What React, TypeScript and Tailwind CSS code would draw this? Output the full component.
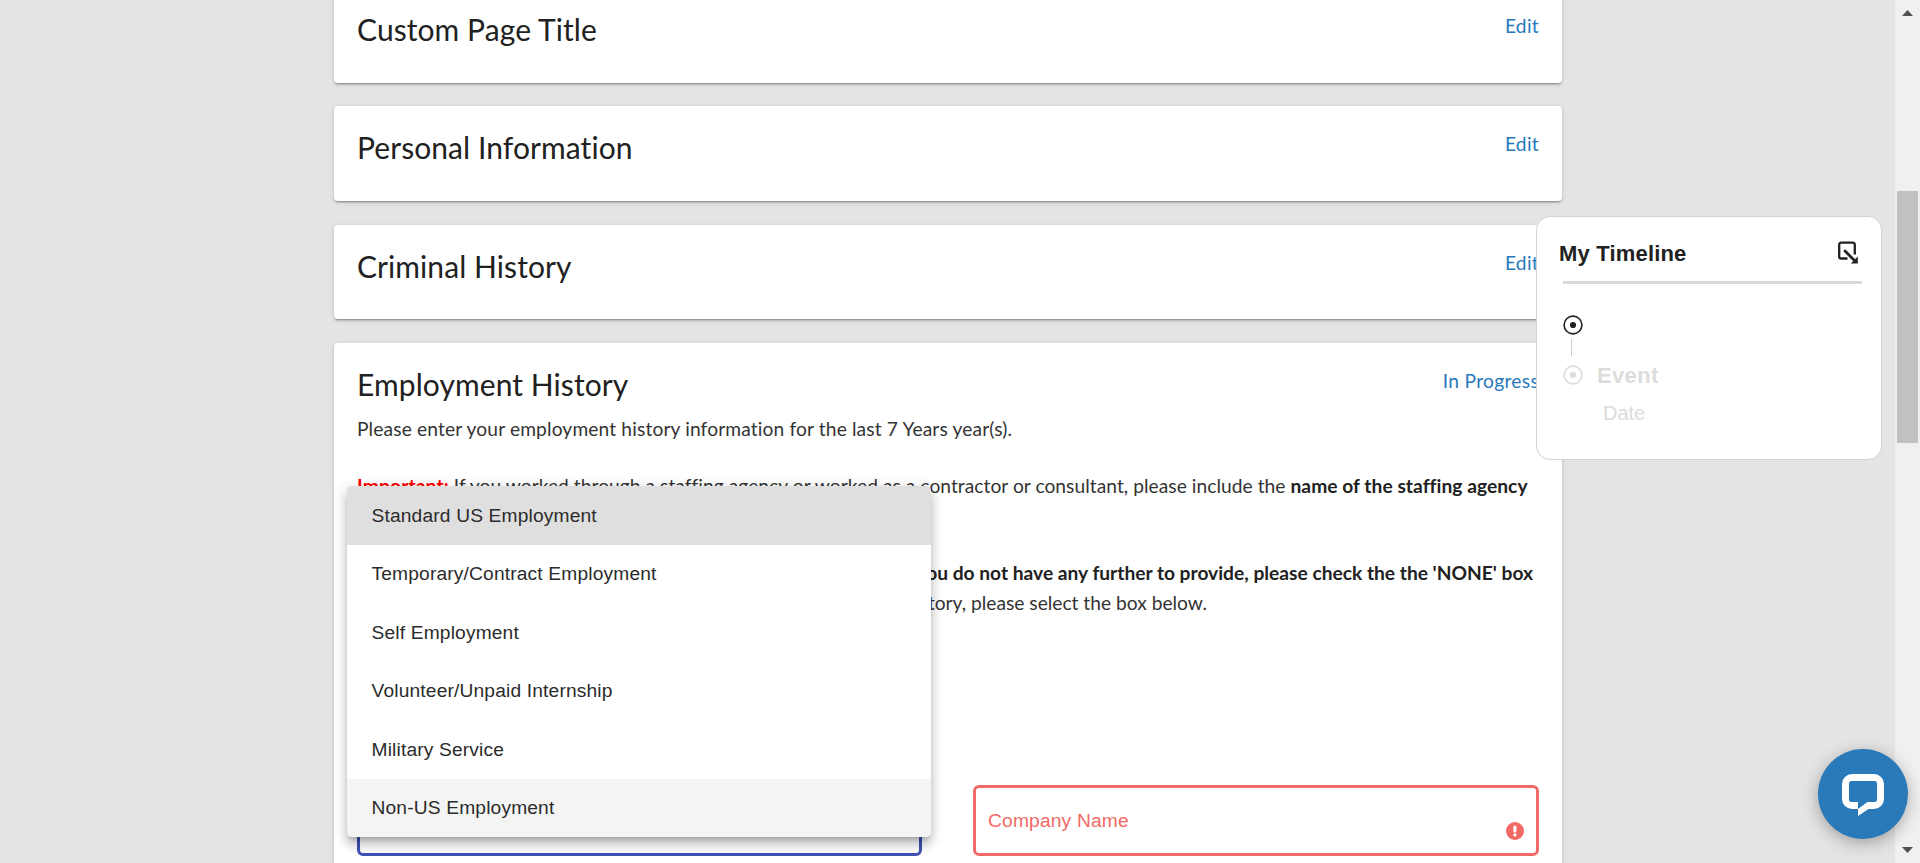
import React from "react";

const cardClass =
  "bg-white rounded-[4px] px-[23px] shadow-[0_3px_1px_-2px_rgba(0,0,0,0.2),0_2px_2px_0_rgba(0,0,0,0.14),0_1px_5px_0_rgba(0,0,0,0.12)]";

function SectionHeader({ title, action }: { title: string; action: string }) {
  return (
    <div className="flex items-start justify-between">
      <h2 className="-mt-[2px] text-[30px] leading-[38px] tracking-[0.08px] whitespace-nowrap">{title}</h2>
      <a className="-mt-px text-[19.2px] leading-[29px] tracking-[0.3px] whitespace-nowrap text-[#2779bd]">
        {action}
      </a>
    </div>
  );
}

function Target({ className }: { className: string }) {
  return (
    <svg className={className} width="20" height="20" viewBox="0 0 20 20" fill="none">
      <circle cx="10" cy="10" r="8.9" stroke="currentColor" strokeWidth="1.6" />
      <circle cx="10" cy="10" r="3.1" fill="currentColor" />
    </svg>
  );
}

const sections = ["Custom Page Title", "Personal Information", "Criminal History"];

const options = [
  { label: "Standard US Employment", row: "bg-[#dfdfdf]" },
  { label: "Temporary/Contract Employment", row: "bg-white" },
  { label: "Self Employment", row: "bg-white" },
  { label: "Volunteer/Unpaid Internship", row: "bg-white" },
  { label: "Military Service", row: "bg-white" },
  { label: "Non-US Employment", row: "bg-[#f4f4f4]" },
];

export default function App() {
  return (
    <div className="relative flex h-[863px] w-full overflow-hidden bg-[#e4e4e4] font-['Lato',sans-serif] text-[#212121] [font-variant-ligatures:none]">
      <main className="-mt-[12px] ml-[334px] flex h-[1000px] w-[1228px] shrink-0 flex-col gap-[23.8px]">
        {sections.map((title) => (
          <section key={title} className={`${cardClass} h-[94.5px] shrink-0 pt-[24px]`}>
            <SectionHeader title={title} action="Edit" />
          </section>
        ))}

        <section className={`${cardClass} flex-1 pt-[24px]`}>
          <SectionHeader title="Employment History" action="In Progress" />
          <div className="text-[19.2px] leading-[28.8px] whitespace-nowrap text-[#333333]">
            <p className="mt-[12px] tracking-[0.14px]">
              Please enter your employment history information for the last 7 Years year(s).
            </p>
            <p className="mt-[28.8px] tracking-[0.045px]">
              <strong className="tracking-[0.15px] text-[#ff0000]">Important:</strong> If you worked
              through a staffing agency or worked as a contractor or consultant, please include the{" "}
              <strong className="text-[#212121]">name of the staffing agency</strong>
            </p>
            <p className="mt-[57.6px] pr-[6px] text-right text-[#212121]">
              <strong>you do not have any further to provide, please check the the 'NONE' box</strong>
            </p>
            <p className="mt-px pr-[332px] text-right">history, please select the box below.</p>
          </div>
          <div className="mt-[168px] flex justify-between font-['Liberation_Sans',Arial,sans-serif]">
            <div className="h-[71px] w-[565px] rounded-[6px] border-[3px] border-[#3f51b5]" />
            <div className="flex h-[71px] w-[566px] justify-between rounded-[6px] border-[3px] border-[#f26a65] px-[12px] text-[#f26a65]">
              <span className="mt-[18px] text-[19.2px] leading-[29px] tracking-[0.18px]">
                Company Name
              </span>
              <svg className="mt-[34px]" width="18" height="18" viewBox="0 0 18 18">
                <circle cx="9" cy="9" r="9" fill="#f26a65" />
                <rect x="7.4" y="3.8" width="3" height="6.6" rx="0.8" fill="#fff" />
                <circle cx="8.9" cy="12.9" r="1.6" fill="#fff" />
              </svg>
            </div>
          </div>
        </section>
      </main>

      <ul className="absolute top-[486px] left-[347px] w-[584px] overflow-hidden rounded-[5px] font-['Liberation_Sans',Arial,sans-serif] shadow-[0_5px_5px_-3px_rgba(0,0,0,0.2),0_8px_10px_1px_rgba(0,0,0,0.14),0_3px_14px_2px_rgba(0,0,0,0.12)]">
        {options.map((o) => (
          <li
            key={o.label}
            className={`flex h-[58.5px] items-center pt-[2px] pl-[24.5px] text-[19.2px] tracking-[0.16px] text-[#2b2b2b] ${o.row}`}
          >
            {o.label}
          </li>
        ))}
      </ul>

      <aside className="absolute top-[216px] left-[1536px] h-[244px] w-[346px] rounded-[14px] border border-[#d3d3d3] bg-white font-['Liberation_Sans',Arial,sans-serif]">
        <div className="flex items-start justify-between px-[22px] pt-[23px]">
          <h3 className="text-[22px] leading-[28px] font-bold tracking-[0.18px]">My Timeline</h3>
          <svg className="mt-px" width="22" height="24" viewBox="0 0 22 24" fill="none" stroke="currentColor">
            <path
              d="M10.500 17.500H4A1.800 1.800 0 0 1 2.200 15.700V3.500A1.800 1.800 0 0 1 4 1.700H16A1.800 1.800 0 0 1 17.800 3.500V13.500"
              strokeWidth="2.300"
            />
            <path d="M8 10L18 20" strokeWidth="2.800" strokeLinecap="round" />
            <path d="M20.800 15.500V22.500H13.800Z" fill="currentColor" stroke="none" />
          </svg>
        </div>
        <div className="mt-[13px] ml-[26px] h-[3px] w-[299px] bg-[#d9d9d9]" />
        <div className="mt-[30.5px] ml-[26px]">
          <Target className="block" />
          <div className="mt-[4.5px] ml-[8px] h-[17px] w-px bg-[#d0d0d0]" />
          <div className="mt-[5px] flex h-[28px] items-center text-[#dcdcdc]">
            <Target className="block" />
            <span className="ml-[14px] text-[22px] font-bold tracking-[0.35px]">Event</span>
          </div>
          <div className="mt-[10px] ml-[40px] text-[20px] leading-[28px] text-[#dcdcdc]">Date</div>
        </div>
      </aside>

      <div className="absolute inset-y-0 right-0 flex w-[25px] flex-col items-center bg-[#f0f0f0]">
        <svg className="mt-[10px]" width="11" height="6" viewBox="0 0 11 6">
          <path d="M5.500 0L11 6H0Z" fill="#505050" />
        </svg>
        <div className="mt-[175px] mr-px h-[252px] w-[21px] bg-[#c1c1c1]" />
        <svg className="mt-auto mb-[10px]" width="11" height="6" viewBox="0 0 11 6">
          <path d="M0 0H11L5.500 6Z" fill="#505050" />
        </svg>
      </div>

      <button className="absolute top-[749px] left-[1818px] flex h-[90px] w-[90px] items-center justify-center rounded-full bg-[#2a79b9] shadow-[0_4px_16px_rgba(0,0,0,0.3)]">
        <svg className="mt-[2px]" width="42" height="42" viewBox="0 0 42 42">
          <path
            d="M10 0H32A10 10 0 0 1 42 10V25A10 10 0 0 1 32 35H26.500L16 42V35H10A10 10 0 0 1 0 25V10A10 10 0 0 1 10 0ZM9.500 7A2.500 2.500 0 0 0 7 9.500V25.500A2.500 2.500 0 0 0 9.500 28H16V35L25.500 28H32.500A2.500 2.500 0 0 0 35 25.500V9.500A2.500 2.500 0 0 0 32.500 7Z"
            fill="#fff"
            fillRule="evenodd"
          />
        </svg>
      </button>
    </div>
  );
}
